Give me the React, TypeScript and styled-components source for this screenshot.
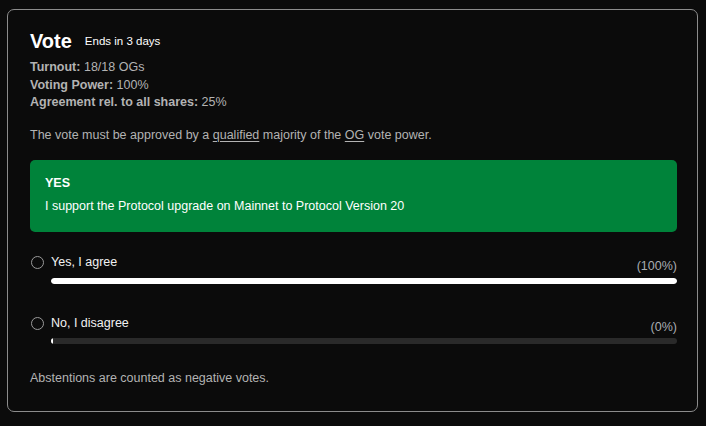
import styled, { createGlobalStyle } from "styled-components";

const GlobalStyle = createGlobalStyle`
  html, body {
    margin: 0;
    padding: 0;
    background: #0b0b0b;
  }
  body {
    padding: 9px 8px 0 7px;
    font-family: "Liberation Sans", Arial, sans-serif;
  }
`;

const Card = styled.section`
  border: 1px solid #8c8c8c;
  border-radius: 7px;
  padding: 20px 20px 23px 22px;
  color: #b3b3b3;
  font-size: 12.5px;
  line-height: 17.5px;
`;

const TitleRow = styled.div`
  display: flex;
  align-items: center;
  gap: 13px;
  height: 24px;
  margin-bottom: 5px;
`;

const Title = styled.h2`
  margin: 0;
  font-size: 20px;
  font-weight: 700;
  color: #ffffff;
`;

const Ends = styled.span`
  font-size: 11.5px;
  color: #ffffff;
`;

const Stat = styled.div`
  & b {
    font-weight: 700;
  }
`;

const Note = styled.p`
  margin: 15px 0 0;
`;

const Link = styled.a`
  color: inherit;
  text-decoration: underline;
  text-underline-offset: 2px;
`;

const Proposal = styled.div`
  margin-top: 16px;
  background: #00833a;
  border-radius: 5px;
  padding: 15px 14px 17px 15px;
  color: #ffffff;
`;

const ProposalTitle = styled.div`
  font-weight: 700;
  margin-bottom: 5px;
`;

const Options = styled.div`
  margin-top: 22px;
  display: flex;
  flex-direction: column;
  gap: 31px;
`;

const Option = styled.div`
  display: grid;
  grid-template-columns: 14px 1fr;
  column-gap: 7px;
`;

const Radio = styled.span`
  width: 13px;
  height: 13px;
  box-sizing: border-box;
  border: 1px solid #9a9a9a;
  border-radius: 50%;
  margin: 2px 0 0 1px;
`;

const OptionBody = styled.div`
  display: flex;
  flex-direction: column;
`;

const OptionHead = styled.div`
  display: flex;
  justify-content: space-between;
  align-items: flex-start;
`;

const OptionLabel = styled.span`
  color: #f2f2f2;
`;

const Percent = styled.span`
  margin-top: 4px;
  color: #a9adb2;
`;

const Track = styled.div`
  margin-top: 2px;
  height: 6px;
  border-radius: 3px;
  background: #2a2a2a;
  overflow: hidden;
`;

const Fill = styled.div`
  height: 100%;
  min-width: 2px;
  border-radius: 3px;
  background: #ffffff;
`;

const Footer = styled.p`
  margin: 26px 0 0;
`;

const options = [
  { label: "Yes, I agree", pct: 100 },
  { label: "No, I disagree", pct: 0 },
];

export default function App() {
  return (
    <>
      <GlobalStyle />
      <Card>
        <TitleRow>
          <Title>Vote</Title>
          <Ends>Ends in 3 days</Ends>
        </TitleRow>
        <div>
          <Stat>
            <b>Turnout:</b> 18/18 OGs
          </Stat>
          <Stat>
            <b>Voting Power:</b> 100%
          </Stat>
          <Stat>
            <b>Agreement rel. to all shares:</b> 25%
          </Stat>
        </div>
        <Note>
          The vote must be approved by a <Link>qualified</Link> majority of the{" "}
          <Link>OG</Link> vote power.
        </Note>
        <Proposal>
          <ProposalTitle>YES</ProposalTitle>
          <div>I support the Protocol upgrade on Mainnet to Protocol Version 20</div>
        </Proposal>
        <Options>
          {options.map((o) => (
            <Option key={o.label}>
              <Radio />
              <OptionBody>
                <OptionHead>
                  <OptionLabel>{o.label}</OptionLabel>
                  <Percent>({o.pct}%)</Percent>
                </OptionHead>
                <Track>
                  <Fill style={{ width: `${o.pct}%` }} />
                </Track>
              </OptionBody>
            </Option>
          ))}
        </Options>
        <Footer>Abstentions are counted as negative votes.</Footer>
      </Card>
    </>
  );
}
